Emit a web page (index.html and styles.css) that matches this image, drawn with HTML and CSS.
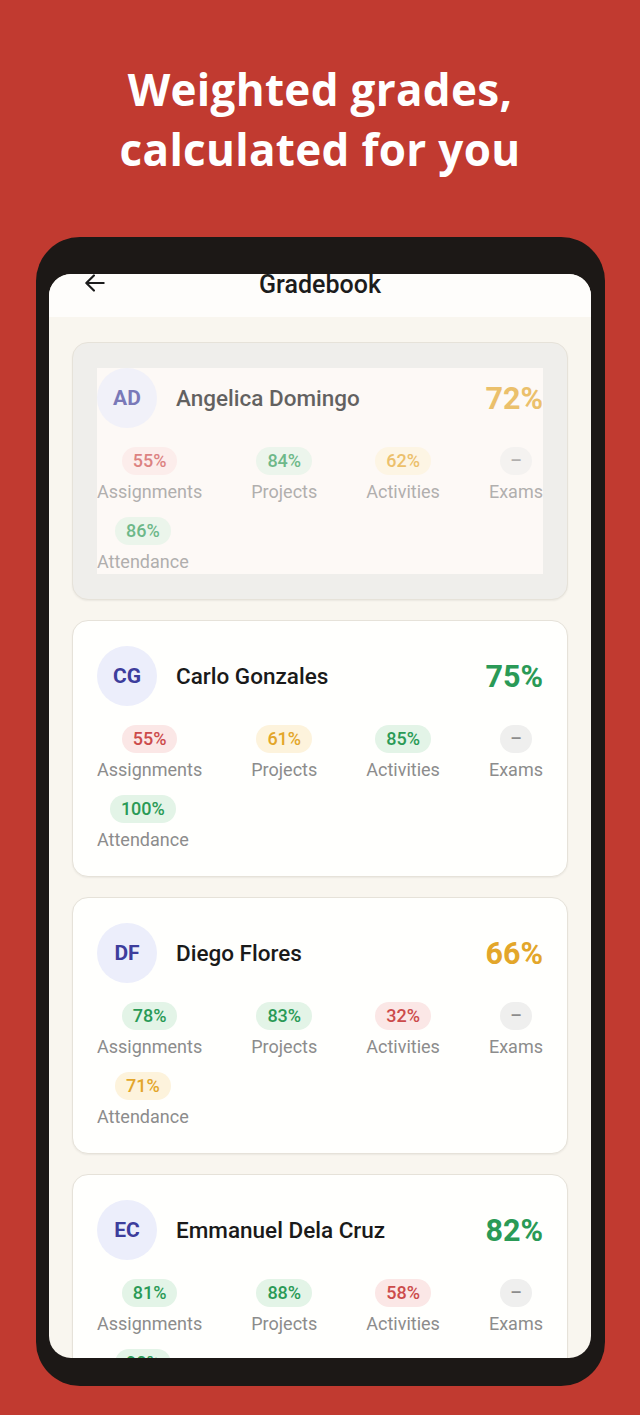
FILE: index.html
```html
<!DOCTYPE html>
<html lang="en">

<head>
    <meta charset="UTF-8">
    <meta name="viewport" content="width=device-width, initial-scale=1.0">
    <title>Gradebook</title>
    <link rel="stylesheet" href="styles.css">
</head>

<body>
    <h1 class="headline">Weighted grades,<br>calculated for you</h1>

    <div class="phone">
        <div class="screen">
            <div class="app-bar">
                <svg class="back" width="26" height="26" viewBox="0 0 24 24" fill="none" stroke="#1c1c1c"
                    stroke-width="2" stroke-linecap="round" stroke-linejoin="round">
                    <path d="M20 12H4.5M11 5l-7 7 7 7" />
                </svg>
                <div class="app-title">Gradebook</div>
            </div>

            <div class="list">
                <!-- first card is being dragged -->
                <div class="card dragging">
                    <div class="card-body">
                        <div class="card-head">
                            <div class="avatar">AD</div>
                            <div class="name">Angelica Domingo</div>
                            <div class="total yellow">72%</div>
                        </div>
                        <div class="grades">
                            <div class="grade"><span class="pill red">55%</span><span class="label">Assignments</span></div>
                            <div class="grade"><span class="pill green">84%</span><span class="label">Projects</span></div>
                            <div class="grade"><span class="pill yellow">62%</span><span class="label">Activities</span></div>
                            <div class="grade"><span class="pill grey">–</span><span class="label">Exams</span></div>
                            <div class="grade"><span class="pill green">86%</span><span class="label">Attendance</span></div>
                        </div>
                    </div>
                </div>

                <div class="card">
                    <div class="card-body">
                        <div class="card-head">
                            <div class="avatar">CG</div>
                            <div class="name">Carlo Gonzales</div>
                            <div class="total green">75%</div>
                        </div>
                        <div class="grades">
                            <div class="grade"><span class="pill red">55%</span><span class="label">Assignments</span></div>
                            <div class="grade"><span class="pill yellow">61%</span><span class="label">Projects</span></div>
                            <div class="grade"><span class="pill green">85%</span><span class="label">Activities</span></div>
                            <div class="grade"><span class="pill grey">–</span><span class="label">Exams</span></div>
                            <div class="grade"><span class="pill green">100%</span><span class="label">Attendance</span></div>
                        </div>
                    </div>
                </div>

                <div class="card">
                    <div class="card-body">
                        <div class="card-head">
                            <div class="avatar">DF</div>
                            <div class="name">Diego Flores</div>
                            <div class="total yellow">66%</div>
                        </div>
                        <div class="grades">
                            <div class="grade"><span class="pill green">78%</span><span class="label">Assignments</span></div>
                            <div class="grade"><span class="pill green">83%</span><span class="label">Projects</span></div>
                            <div class="grade"><span class="pill red">32%</span><span class="label">Activities</span></div>
                            <div class="grade"><span class="pill grey">–</span><span class="label">Exams</span></div>
                            <div class="grade"><span class="pill yellow">71%</span><span class="label">Attendance</span></div>
                        </div>
                    </div>
                </div>

                <div class="card">
                    <div class="card-body">
                        <div class="card-head">
                            <div class="avatar">EC</div>
                            <div class="name">Emmanuel Dela Cruz</div>
                            <div class="total green">82%</div>
                        </div>
                        <div class="grades">
                            <div class="grade"><span class="pill green">81%</span><span class="label">Assignments</span></div>
                            <div class="grade"><span class="pill green">88%</span><span class="label">Projects</span></div>
                            <div class="grade"><span class="pill red">58%</span><span class="label">Activities</span></div>
                            <div class="grade"><span class="pill grey">–</span><span class="label">Exams</span></div>
                            <div class="grade"><span class="pill green">90%</span><span class="label">Attendance</span></div>
                        </div>
                    </div>
                </div>
            </div>
        </div>
    </div>
</body>

</html>
```

FILE: styles.css
```css
body {
    margin: 0;
    width: 640px;
    height: 1415px;
    overflow: hidden;
    background-color: #c13a30;
    font-family: Roboto, "Noto Sans", sans-serif;
}

.headline {
    margin: 0;
    padding-top: 59px;
    height: 237px;
    box-sizing: border-box;
    color: white;
    font-family: "Open Sans", "Noto Sans", sans-serif;
    font-weight: 700;
    font-size: 44px;
    line-height: 60px;
    letter-spacing: 0.3px;
    text-align: center;
}

.phone {
    margin-left: 36px;
    width: 569px;
    height: 1149px;
    box-sizing: border-box;
    padding: 37px 14px 28px 13px;
    background-color: #1c1816;
    border-radius: 44px;
}

.screen {
    height: 100%;
    background-color: #f9f6ef;
    border-radius: 22px;
    overflow: hidden;
}

.app-bar {
    position: relative;
    height: 44px;
    background-color: #fefdfb;
}

.back {
    position: absolute;
    left: 33px;
    top: -3px;
}

.app-title {
    margin-top: -1px;
    text-align: center;
    font-size: 25px;
    font-weight: 500;
    line-height: 24px;
    color: #1c1c1c;
}

.list {
    padding: 25px 23px;
    display: flex;
    flex-direction: column;
    gap: 20px;
}

.card {
    background-color: #fffffd;
    border: 1px solid #e6e2d9;
    border-radius: 16px;
    box-shadow: 0 1px 2px rgba(0, 0, 0, 0.06);
}

.card-body {
    margin: 25px 24px 24px;
}

.card.dragging {
    background-color: #efeeeb;
}

.card.dragging .card-body {
    margin-bottom: 25px;
    background-color: #fdf9f6;
}

.card.dragging .card-body > * {
    opacity: 0.68;
}

.card-head {
    display: flex;
    align-items: center;
    height: 60px;
}

.avatar {
    width: 60px;
    height: 60px;
    border-radius: 50%;
    background-color: #eceefb;
    color: #3d3d9c;
    font-size: 21px;
    font-weight: 700;
    display: flex;
    align-items: center;
    justify-content: center;
}

.name {
    flex: 1;
    margin-left: 19px;
    font-size: 22.5px;
    font-weight: 500;
    color: #1a1a1a;
}

.total {
    font-size: 30.5px;
    font-weight: 700;
}

.grades {
    margin-top: 19px;
    display: grid;
    grid-template-columns: repeat(4, auto);
    justify-content: space-between;
    justify-items: start;
    row-gap: 13px;
}

.grade {
    display: flex;
    flex-direction: column;
    align-items: center;
}

.pill {
    height: 28px;
    line-height: 28px;
    padding: 0 11px;
    border-radius: 14px;
    font-size: 18px;
    font-weight: 500;
}

.label {
    margin-top: 5px;
    font-size: 18px;
    line-height: 24px;
    color: #8c8c8c;
}

.red {
    color: #cc4b4b;
}

.pill.red {
    background-color: #fbe7e6;
}

.green {
    color: #2a9a56;
}

.pill.green {
    background-color: #e3f4e7;
}

.yellow {
    color: #e3a62a;
}

.pill.yellow {
    background-color: #fdf3dc;
}

.pill.grey {
    background-color: #efefee;
    color: #8c8c8c;
    padding: 0 10px;
}
```
